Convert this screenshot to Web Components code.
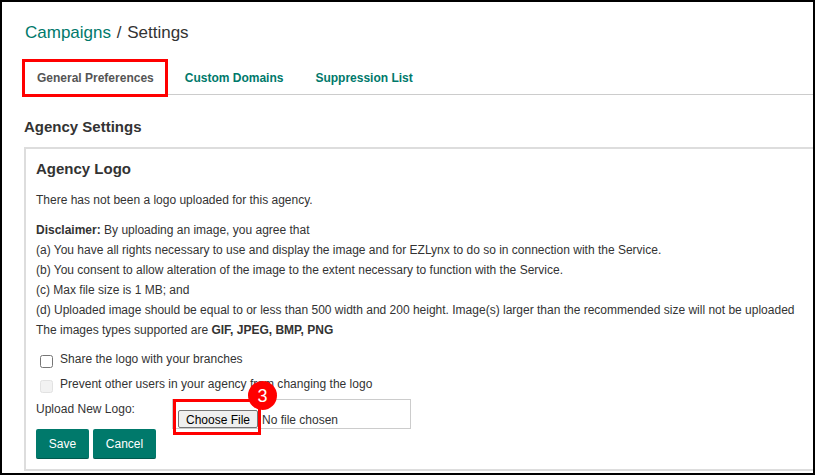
<!DOCTYPE html>
<html lang="en">
<head>
<meta charset="utf-8">
<title>Settings</title>
<style>
  html, body { margin: 0; padding: 0; background: #fff; }
  body { font-family: "Liberation Sans", Arial, sans-serif; color: #333; }
</style>
</head>
<body>
<settings-page></settings-page>

<script>
// red marker round a tutorial target, sits over the content
class MarkBox extends HTMLElement {
  connectedCallback() {
    this.attachShadow({mode: 'open'}).innerHTML = `
    <style>
      :host { position: absolute; display: block; box-sizing: border-box; border: 3px solid #f00; pointer-events: none; }
    </style>`;
  }
}

class StepBadge extends HTMLElement {
  connectedCallback() {
    this.attachShadow({mode: 'open'}).innerHTML = `
    <style>
      :host { position: absolute; display: flex; align-items: center; justify-content: center; width: 29px; height: 29px; border-radius: 50%; background: #f00; color: #fff; font-size: 18px; line-height: 20px; }
    </style>
    <slot></slot>`;
  }
}

class CrumbBar extends HTMLElement {
  connectedCallback() {
    this.attachShadow({mode: 'open'}).innerHTML = `
    <style>
      :host { display: block; font-size: 17px; line-height: 20px; color: #333; padding-left: 23px; }
      a { color: #00796b; text-decoration: none; }
      .sep { margin: 0 1px; }
    </style>
    <a href="#">Campaigns</a> <span class="sep">/</span> Settings`;
  }
}

class TabStrip extends HTMLElement {
  connectedCallback() {
    this.attachShadow({mode: 'open'}).innerHTML = `
    <style>
      :host { display: flex; height: 35px; margin-left: 22px; border-bottom: 1px solid #ccc; font-size: 12px; font-weight: 700; position: relative; }
      a { display: block; padding: 12px 13px 0 13px; line-height: 15px; color: #00796b; text-decoration: none; }
      a.on { color: #555; }
      mark-box { left: -2px; top: 0; width: 146px; height: 38px; }
    </style>
    <a class="on" href="#">General Preferences</a>
    <a href="#" style="padding-left:18px;padding-right:16px">Custom Domains</a>
    <a href="#" style="padding-left:16px">Suppression List</a>
    <mark-box></mark-box>`;
  }
}

class CheckRow extends HTMLElement {
  connectedCallback() {
    this.attachShadow({mode: 'open'}).innerHTML = `
    <style>
      :host { display: flex; align-items: flex-start; gap: 7px; padding-left: 4px; height: 25px; font-size: 12px; line-height: 15px; letter-spacing: .015px; }
      i { display: block; box-sizing: border-box; width: 13px; height: 13px; margin-top: 3px; border: 1px solid #767676; border-radius: 2.5px; background: #fff; }
      :host([disabled]) { height: 22px; }
      :host([disabled]) i { border-color: #e2e2e2; background: #f2f2f2; }
    </style>
    <i></i><span><slot></slot></span>`;
  }
}

class FilePick extends HTMLElement {
  connectedCallback() {
    this.attachShadow({mode: 'open'}).innerHTML = `
    <style>
      :host { display: flex; align-items: center; box-sizing: border-box; width: 239px; height: 30px; border: 1px solid #ccc; padding: 10px 0 0 5px; font-size: 12px; color: #333; }
      button { box-sizing: border-box; width: 80px; height: 18px; margin: 0 4px 0 0; padding: 1px 0 0; border: 1px solid #767676; border-radius: 2px; background: #efefef; color: #000; font: 12px "Liberation Sans", Arial, sans-serif; }
      span { padding-top: 1px; }
    </style>
    <button type="button">Choose File</button><span>No file chosen</span>`;
  }
}

class GreenButton extends HTMLElement {
  connectedCallback() {
    this.attachShadow({mode: 'open'}).innerHTML = `
    <style>
      :host { display: block; }
      button { display: block; width: var(--w, auto); height: 30px; padding: 0; border: 0; border-bottom: 1px solid #00594e; border-radius: 2px; background: #00796b; color: #fff; font: 12px "Liberation Sans", Arial, sans-serif; }
    </style>
    <button type="button"><slot></slot></button>`;
  }
}

class LogoCard extends HTMLElement {
  connectedCallback() {
    this.attachShadow({mode: 'open'}).innerHTML = `
    <style>
      :host { display: block; box-sizing: border-box; width: 900px; height: 324px; margin-left: 22px; border: 2px solid #ddd; padding: 12px 10px 0; font-size: 12px; color: #333; }
      h3 { margin: 0 0 13px; font-size: 15px; line-height: 16px; font-weight: 700; }
      p { margin: 0; line-height: 20px; white-space: nowrap; }
      .first { margin-bottom: 10px; }
      .list { margin-bottom: 12px; }
      .upload { display: flex; height: 30px; }
      .upload label { width: 136px; padding-top: 3px; line-height: 15px; letter-spacing: .015px; }
      .actions { display: flex; gap: 4px; }
    </style>
    <h3>Agency Logo</h3>
    <p class="first">There has not been a logo uploaded for this agency.</p>
    <div class="list">
      <p><b>Disclaimer:</b> By uploading an image, you agree that</p>
      <p>(a) You have all rights necessary to use and display the image and for EZLynx to do so in connection with the Service.</p>
      <p>(b) You consent to allow alteration of the image to the extent necessary to function with the Service.</p>
      <p>(c) Max file size is 1 MB; and</p>
      <p>(d) Uploaded image should be equal to or less than 500 width and 200 height. Image(s) larger than the recommended size will not be uploaded</p>
      <p>The images types supported are <b>GIF, JPEG, BMP, PNG</b></p>
    </div>
    <check-row>Share the logo with your branches</check-row>
    <check-row disabled>Prevent other users in your agency from changing the logo</check-row>
    <div class="upload">
      <label>Upload New Logo:</label>
      <file-pick></file-pick>
    </div>
    <div class="actions">
      <green-button style="--w:53px">Save</green-button>
      <green-button style="--w:63px">Cancel</green-button>
    </div>`;
  }
}

class SettingsPage extends HTMLElement {
  connectedCallback() {
    this.attachShadow({mode: 'open'}).innerHTML = `
    <style>
      :host { display: block; box-sizing: border-box; width: 815px; height: 475px; border: 2px solid #000; overflow: hidden; background: #fff; position: relative; }
      crumb-bar { margin-top: 21px; }
      tab-strip { margin-top: 16px; }
      h2 { margin: 23px 0 11px 22px; font-size: 15px; line-height: 18px; font-weight: 700; color: #333; }
      mark-box.file { left: 171px; top: 397px; width: 88px; height: 36px; }
      step-badge { left: 246px; top: 379px; }
    </style>
    <crumb-bar></crumb-bar>
    <tab-strip></tab-strip>
    <h2>Agency Settings</h2>
    <logo-card></logo-card>
    <mark-box class="file"></mark-box>
    <step-badge>3</step-badge>`;
  }
}

customElements.define('mark-box', MarkBox);
customElements.define('step-badge', StepBadge);
customElements.define('crumb-bar', CrumbBar);
customElements.define('tab-strip', TabStrip);
customElements.define('check-row', CheckRow);
customElements.define('file-pick', FilePick);
customElements.define('green-button', GreenButton);
customElements.define('logo-card', LogoCard);
customElements.define('settings-page', SettingsPage);
</script>
</body>
</html>
